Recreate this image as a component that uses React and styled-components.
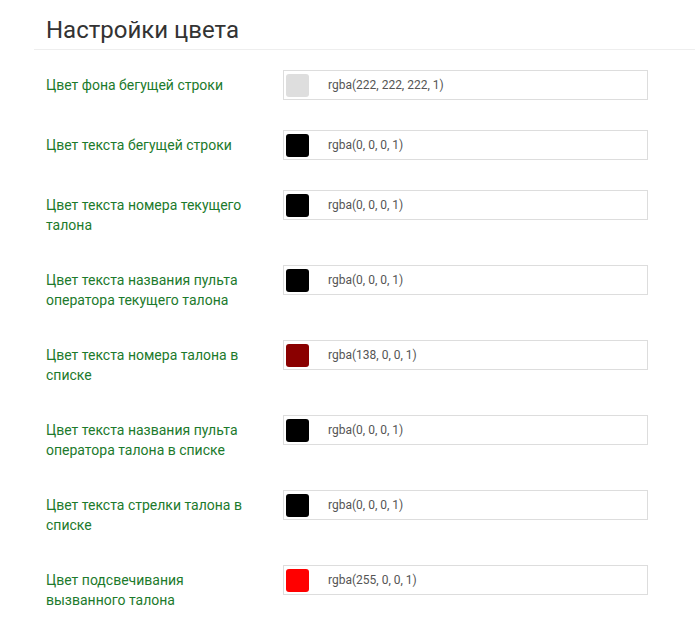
import React from "react";
import styled, { createGlobalStyle } from "styled-components";

const GlobalStyle = createGlobalStyle`
  body {
    margin: 0;
    background: #fff;
    font-family: Roboto, "Noto Sans", sans-serif;
  }
`;

const Wrapper = styled.div`
  margin-left: 34px;
  padding-top: 17px;
`;

const Title = styled.h2`
  margin: 0;
  padding: 0 12px 6px;
  font-size: 24px;
  font-weight: 400;
  line-height: 26px;
  color: #333;
  border-bottom: 1px solid #eee;
`;

const Form = styled.div`
  padding: 20px 0 0 12px;
`;

const Row = styled.div`
  display: flex;
  align-items: flex-start;
  margin-bottom: 30px;
`;

const Label = styled.label`
  width: 205px;
  margin-right: 32px;
  padding-top: 5px;
  font-size: 14px;
  line-height: 20px;
  color: #1c7a2c;
`;

const ColorInput = styled.div`
  box-sizing: border-box;
  display: flex;
  align-items: center;
  width: 365px;
  height: 30px;
  padding: 0 2px;
  border: 1px solid #ddd;
  background: #fff;
`;

const Swatch = styled.span`
  width: 23px;
  height: 23px;
  border-radius: 3px;
  background: ${p => p.color};
`;

const Value = styled.span`
  margin-left: 19px;
  font-size: 12px;
  color: #555;
`;

const colors = [
  { label: "Цвет фона бегущей строки", value: "rgba(222, 222, 222, 1)" },
  { label: "Цвет текста бегущей строки", value: "rgba(0, 0, 0, 1)" },
  { label: "Цвет текста номера текущего талона", value: "rgba(0, 0, 0, 1)" },
  { label: "Цвет текста названия пульта оператора текущего талона", value: "rgba(0, 0, 0, 1)" },
  { label: "Цвет текста номера талона в списке", value: "rgba(138, 0, 0, 1)" },
  { label: "Цвет текста названия пульта оператора талона в списке", value: "rgba(0, 0, 0, 1)" },
  { label: "Цвет текста стрелки талона в списке", value: "rgba(0, 0, 0, 1)" },
  { label: "Цвет подсвечивания вызванного талона", value: "rgba(255, 0, 0, 1)" },
];

function App() {
  return (
    <>
      <GlobalStyle />
      <Wrapper>
        <Title>Настройки цвета</Title>
        <Form>
          {colors.map((c, i) => (
            <Row key={i}>
              <Label>{c.label}</Label>
              <ColorInput>
                <Swatch color={c.value} />
                <Value>{c.value}</Value>
              </ColorInput>
            </Row>
          ))}
        </Form>
      </Wrapper>
    </>
  );
}

export default App;
